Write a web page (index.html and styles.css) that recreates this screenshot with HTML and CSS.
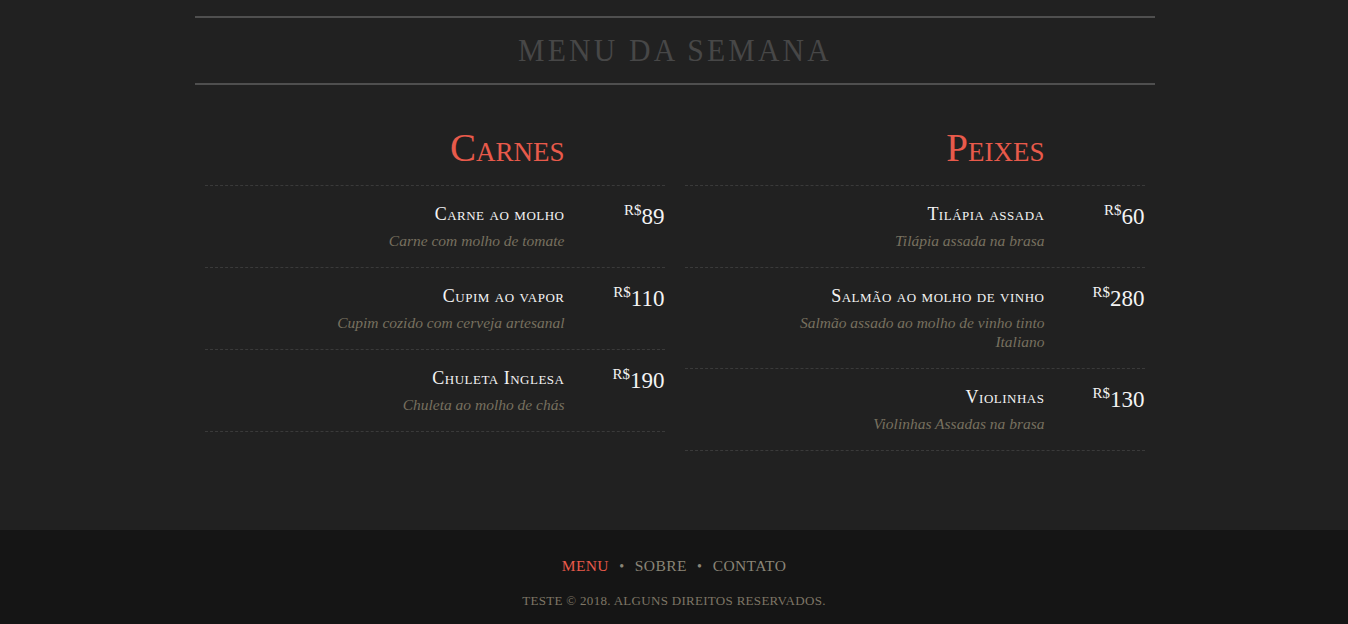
FILE: index.html
```html
<!DOCTYPE html>
<html lang="pt">
<head>
<meta charset="utf-8">
<title>Menu da Semana</title>
<link rel="stylesheet" href="styles.css">
</head>
<body>
<main class="page">
  <header class="title-bar">
    <h1 class="title">Menu da Semana</h1>
  </header>
  <section class="menu">
    <div class="category">
      <h2 class="cat-title">Carnes</h2>
      <div class="item">
        <div class="info">
          <div class="name">Carne ao molho</div>
          <div class="desc">Carne com molho de tomate</div>
        </div>
        <div class="price"><span class="cur">R$</span><span class="val">89</span></div>
      </div>
      <div class="item">
        <div class="info">
          <div class="name">Cupim ao vapor</div>
          <div class="desc">Cupim cozido com cerveja artesanal</div>
        </div>
        <div class="price"><span class="cur">R$</span><span class="val">110</span></div>
      </div>
      <div class="item">
        <div class="info">
          <div class="name">Chuleta Inglesa</div>
          <div class="desc">Chuleta ao molho de chás</div>
        </div>
        <div class="price"><span class="cur">R$</span><span class="val">190</span></div>
      </div>
    </div>
    <div class="category">
      <h2 class="cat-title">Peixes</h2>
      <div class="item">
        <div class="info">
          <div class="name">Tilápia assada</div>
          <div class="desc">Tilápia assada na brasa</div>
        </div>
        <div class="price"><span class="cur">R$</span><span class="val">60</span></div>
      </div>
      <div class="item">
        <div class="info">
          <div class="name">Salmão ao molho de vinho</div>
          <div class="desc">Salmão assado ao molho de vinho tinto Italiano</div>
        </div>
        <div class="price"><span class="cur">R$</span><span class="val">280</span></div>
      </div>
      <div class="item">
        <div class="info">
          <div class="name">Violinhas</div>
          <div class="desc">Violinhas Assadas na brasa</div>
        </div>
        <div class="price"><span class="cur">R$</span><span class="val">130</span></div>
      </div>
    </div>
  </section>
</main>
<footer class="footer">
  <nav class="links">
    <a class="link active" href="#">Menu</a>
    <span class="dot">•</span>
    <a class="link" href="#">Sobre</a>
    <span class="dot">•</span>
    <a class="link" href="#">Contato</a>
  </nav>
  <p class="copy">teste © 2018. Alguns direitos reservados.</p>
</footer>
</body>
</html>
```

FILE: styles.css
```css
html, body {
  margin: 0;
  padding: 0;
}
body {
  background: #212121;
  font-family: "Liberation Serif", "DejaVu Serif", serif;
  color: #eee;
}
.page {
  width: 960px;
  margin: 0 auto;
  padding: 16px 0 79px 1px;
}
.title-bar {
  border-top: 2px solid #4f4f4f;
  border-bottom: 2px solid #4f4f4f;
}
.title {
  margin: 0;
  height: 65px;
  line-height: 65px;
  text-align: center;
  font-weight: normal;
  font-size: 32px;
  letter-spacing: 3.4px;
  text-transform: uppercase;
  color: #474747;
  transform: scaleX(0.93);
}
.menu {
  display: flex;
  align-items: flex-start;
  padding-top: 40px;
}
.category {
  width: 460px;
  padding: 0 10px;
}
.cat-title {
  margin: 0;
  font-weight: normal;
  font-size: 39px;
  line-height: 46px;
  font-variant: small-caps;
  color: #e85a4b;
  text-align: right;
  padding: 0 100px 14px 0;
  border-bottom: 1px dashed #3a3a3a;
}
.item {
  display: flex;
  padding: 16px 0 17px;
  border-bottom: 1px dashed #3a3a3a;
}
.info {
  width: 360px;
  text-align: right;
}
.name {
  font-size: 18px;
  line-height: 24px;
  font-variant: small-caps;
  color: #f4f4f4;
  letter-spacing: 0.5px;
}
.desc {
  margin-top: 5px;
  font-size: 15.5px;
  line-height: 19px;
  font-style: italic;
  color: #77705f;
  padding-left: 95px;
}
.price {
  width: 100px;
  text-align: right;
  color: #f4f4f4;
  line-height: 24px;
}
.cur {
  font-size: 15px;
  vertical-align: top;
  position: relative;
  top: -4px;
}
.val {
  font-size: 23px;
  position: relative;
  top: 3px;
}
.footer {
  background: #151515;
  height: 94px;
  text-align: center;
  padding-top: 26px;
  box-sizing: border-box;
}
.links {
  font-size: 15.5px;
  line-height: 20px;
  letter-spacing: 0.4px;
  text-transform: uppercase;
}
.link {
  color: #8b8577;
  text-decoration: none;
}
.link.active {
  color: #e85a4b;
}
.dot {
  color: #8b8577;
  font-size: 14px;
  margin: 0 6px;
}
.copy {
  margin: 15px 0 0;
  font-size: 13px;
  line-height: 18px;
  letter-spacing: 0.3px;
  text-transform: uppercase;
  color: #7e7666;
}
```
